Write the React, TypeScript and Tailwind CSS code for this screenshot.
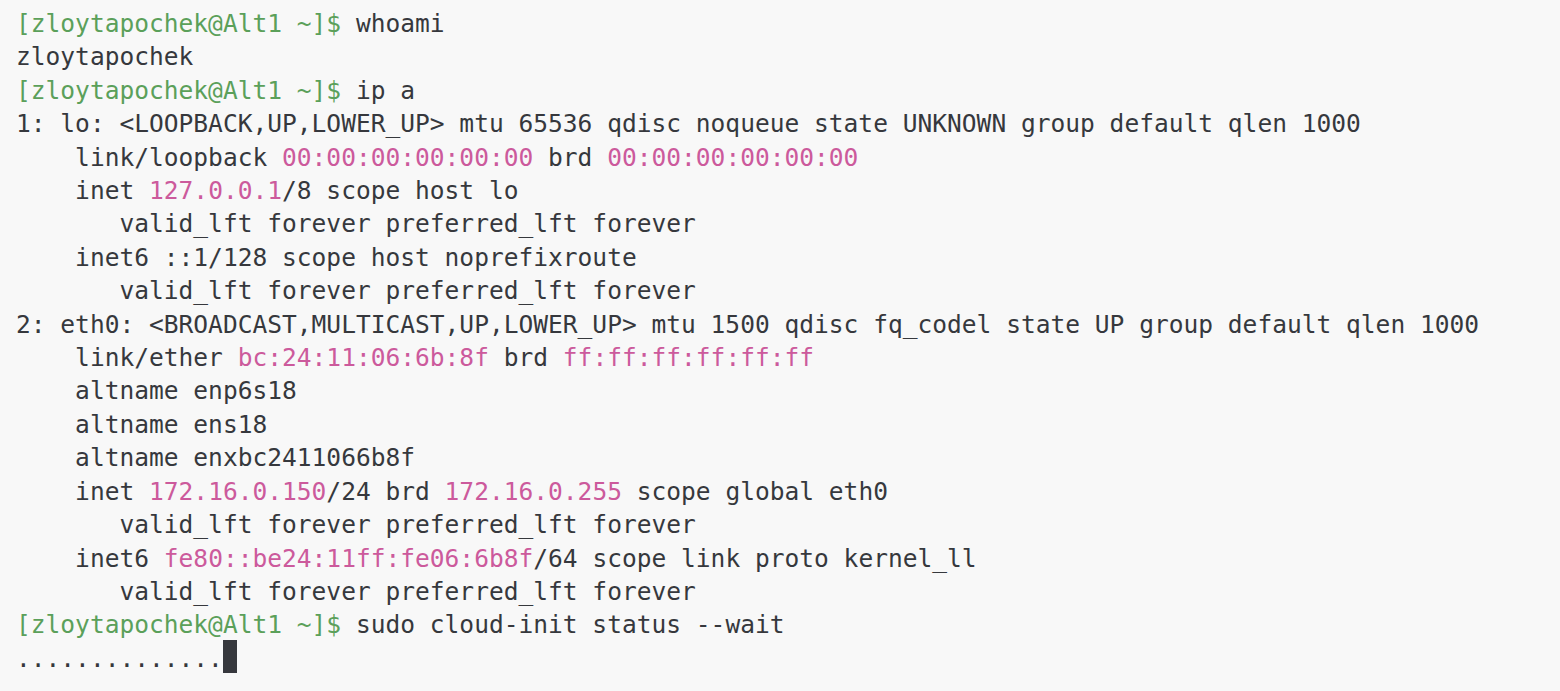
type Seg = { t: string; c?: 'g' | 'p' };

const lines: Seg[][] = [
  [{ t: '[zloytapochek@Alt1 ~]$', c: 'g' }, { t: ' whoami' }],
  [{ t: 'zloytapochek' }],
  [{ t: '[zloytapochek@Alt1 ~]$', c: 'g' }, { t: ' ip a' }],
  [{ t: '1: lo: <LOOPBACK,UP,LOWER_UP> mtu 65536 qdisc noqueue state UNKNOWN group default qlen 1000' }],
  [
    { t: '    link/loopback ' },
    { t: '00:00:00:00:00:00', c: 'p' },
    { t: ' brd ' },
    { t: '00:00:00:00:00:00', c: 'p' },
  ],
  [{ t: '    inet ' }, { t: '127.0.0.1', c: 'p' }, { t: '/8 scope host lo' }],
  [{ t: '       valid_lft forever preferred_lft forever' }],
  [{ t: '    inet6 ::1/128 scope host noprefixroute' }],
  [{ t: '       valid_lft forever preferred_lft forever' }],
  [{ t: '2: eth0: <BROADCAST,MULTICAST,UP,LOWER_UP> mtu 1500 qdisc fq_codel state UP group default qlen 1000' }],
  [
    { t: '    link/ether ' },
    { t: 'bc:24:11:06:6b:8f', c: 'p' },
    { t: ' brd ' },
    { t: 'ff:ff:ff:ff:ff:ff', c: 'p' },
  ],
  [{ t: '    altname enp6s18' }],
  [{ t: '    altname ens18' }],
  [{ t: '    altname enxbc2411066b8f' }],
  [
    { t: '    inet ' },
    { t: '172.16.0.150', c: 'p' },
    { t: '/24 brd ' },
    { t: '172.16.0.255', c: 'p' },
    { t: ' scope global eth0' },
  ],
  [{ t: '       valid_lft forever preferred_lft forever' }],
  [
    { t: '    inet6 ' },
    { t: 'fe80::be24:11ff:fe06:6b8f', c: 'p' },
    { t: '/64 scope link proto kernel_ll' },
  ],
  [{ t: '       valid_lft forever preferred_lft forever' }],
  [{ t: '[zloytapochek@Alt1 ~]$', c: 'g' }, { t: ' sudo cloud-init status --wait' }],
];

function Line({ segs }: { segs: Seg[] }) {
  return (
    <div className="h-[33.42px] whitespace-pre">
      {segs.map((s, i) => (
        <span
          key={i}
          className={
            s.c === 'g' ? 'text-[#5ba05a]' : s.c === 'p' ? 'text-[#cc5a9c]' : ''
          }
        >
          {s.t}
        </span>
      ))}
    </div>
  );
}

export default function App() {
  return (
    <div className="w-[1560px] h-[691px] overflow-hidden bg-[#f8f8f8] text-[#36383d] pl-[16px] pt-[7px] font-['DejaVu_Sans_Mono',monospace] text-[24.55px] leading-[33.42px]">
      {lines.map((l, i) => (
        <Line key={i} segs={l} />
      ))}
      {/* waiting dots + block cursor */}
      <div className="h-[33.42px] flex items-center whitespace-pre">
        <span>..............</span>
        <span className="w-[14px] h-[33px] bg-[#36383d] -mt-[3px]" />
      </div>
    </div>
  );
}
